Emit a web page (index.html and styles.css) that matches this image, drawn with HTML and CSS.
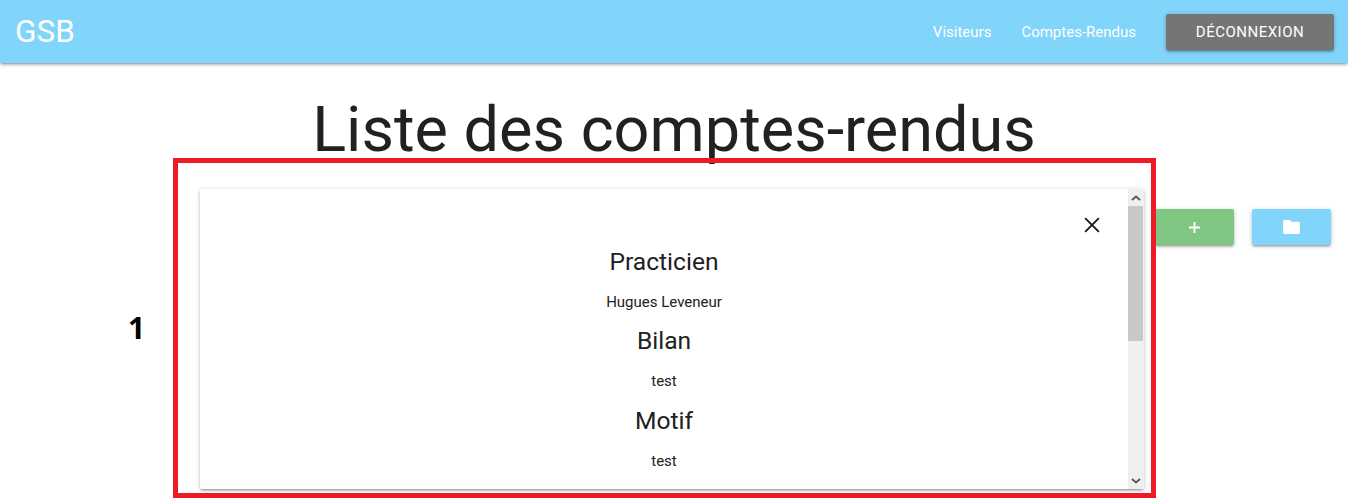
FILE: index.html
```html
<!DOCTYPE html>
<html lang="fr">
<head>
<meta charset="utf-8">
<title>GSB</title>
<link rel="stylesheet" href="styles.css">
</head>
<body>
<nav class="navbar">
  <a class="brand">GSB</a>
  <div class="nav-links">
    <a class="nav-link">Visiteurs</a>
    <a class="nav-link">Comptes-Rendus</a>
    <a class="btn btn-logout">DÉCONNEXION</a>
  </div>
</nav>
<main class="page">
  <h1 class="title">Liste des comptes-rendus</h1>
  <div class="actions">
    <a class="btn btn-action btn-green"><svg class="icon" viewBox="0 0 14 14"><path d="M7 1v12M1 7h12" stroke="#fff" stroke-width="2" fill="none"/></svg></a>
    <a class="btn btn-action btn-blue"><svg class="icon-folder" viewBox="0 0 18 15"><path d="M1.500 0h5.500l2 2h7.500a1.500 1.500 0 0 1 1.500 1.500v10a1.500 1.500 0 0 1-1.500 1.500h-15a1.500 1.500 0 0 1-1.500-1.500v-12a1.500 1.500 0 0 1 1.500-1.500z" fill="#fff"/></svg></a>
  </div>
</main>
<div class="modal">
  <div class="modal-body">
    <div class="close-row">
      <svg class="close" viewBox="0 0 14 14"><path d="M1 1l12 12M13 1L1 13" stroke="#1a1a2a" stroke-width="1.700" fill="none"/></svg>
    </div>
    <h4 class="heading">Practicien</h4>
    <p class="value">Hugues Leveneur</p>
    <h4 class="heading">Bilan</h4>
    <p class="value">test</p>
    <h4 class="heading">Motif</h4>
    <p class="value">test</p>
  </div>
  <div class="scrollbar">
    <svg class="arrow" viewBox="0 0 10 6"><path d="M1 5l4-3.500 4 3.500" stroke="#5a5a5a" stroke-width="2" fill="none"/></svg>
    <div class="track"><div class="thumb"></div></div>
    <svg class="arrow" viewBox="0 0 10 6"><path d="M1 1l4 3.500 4-3.500" stroke="#5a5a5a" stroke-width="2" fill="none"/></svg>
  </div>
</div>
<div class="callout"></div>
<div class="callout-number">1</div>
</body>
</html>
```
FILE: styles.css
```css
* { box-sizing: border-box; }
html, body { height: 499px; overflow: hidden; }
body { margin: 0; background: #fff; color: #212121; font-family: Roboto, sans-serif; position: relative; }
a { text-decoration: none; color: inherit; }

.navbar {
  height: 63px; background: #81d4fa; color: #fff;
  display: flex; align-items: center; justify-content: space-between;
  padding: 1px 14px 0 15px;
  box-shadow: 0 2px 2px 0 rgba(0,0,0,.14), 0 3px 1px -2px rgba(0,0,0,.12), 0 1px 5px 0 rgba(0,0,0,.2);
}
.brand { font-size: 31.5px; line-height: 62px; }
.nav-links { display: flex; align-items: center; }
.nav-link { font-size: 15px; padding: 0 15px; }
.btn {
  display: flex; align-items: center; justify-content: center;
  height: 36px; border-radius: 2px; color: #fff;
  box-shadow: 0 2px 2px 0 rgba(0,0,0,.14), 0 3px 1px -2px rgba(0,0,0,.12), 0 1px 5px 0 rgba(0,0,0,.2);
}
.btn-logout { width: 168px; margin-left: 15px; background: #757575; font-size: 15px; letter-spacing: .5px; }

.page { display: flex; flex-direction: column; }
.title { margin: 28px 0 0; font-size: 63px; font-weight: 400; line-height: 78px; text-align: center; }
.actions { display: flex; justify-content: flex-end; gap: 18px; margin-top: 40px; padding-right: 17px; }
.btn-action { width: 79px; }
.btn-green { background: #81c784; }
.btn-blue { background: #81d4fa; }
.icon { width: 13px; height: 13px; margin-left: -1px; }
.icon-folder { width: 17px; height: 14px; margin-left: -1px; margin-top: -1px; }

.modal {
  position: absolute; left: 200px; top: 189px; width: 944px; height: 300px;
  background: #fff; border-radius: 2px; display: flex; overflow: hidden;
  box-shadow: 0 2px 2px 0 rgba(0,0,0,.14), 0 3px 1px -2px rgba(0,0,0,.12), 0 1px 5px 0 rgba(0,0,0,.2);
}
.modal-body { flex: 1; text-align: center; padding: 28px 28px 0; }
.close-row { display: flex; justify-content: flex-end; height: 16px; }
.close { width: 16px; height: 16px; }
.heading { margin: 0; font-size: 24.6px; font-weight: 400; line-height: 27px; }
.close-row + .heading { margin-top: 15px; }
.value { margin: 0; font-size: 15px; line-height: 22.5px; padding: 16px 0 13.5px; }
.value:nth-of-type(2) { padding-bottom: 14.5px; }
.scrollbar { width: 16px; background: #f0f0f0; display: flex; flex-direction: column; align-items: stretch; padding-right: 1px; }
.arrow { width: 10px; height: 6px; margin: 6px 0 5px 3px; flex: none; }
.track { flex: 1; }
.thumb { height: 135px; background: #c8c8c8; }

.callout {
  position: absolute; left: 173px; top: 158px; width: 983px; height: 340px;
  border: 5px solid #ed1c24; pointer-events: none;
}
.callout-number {
  position: absolute; left: 128px; top: 307px;
  font-family: "Open Sans", sans-serif; font-size: 30px; font-weight: 700; line-height: 41px; color: #000;
}
```
